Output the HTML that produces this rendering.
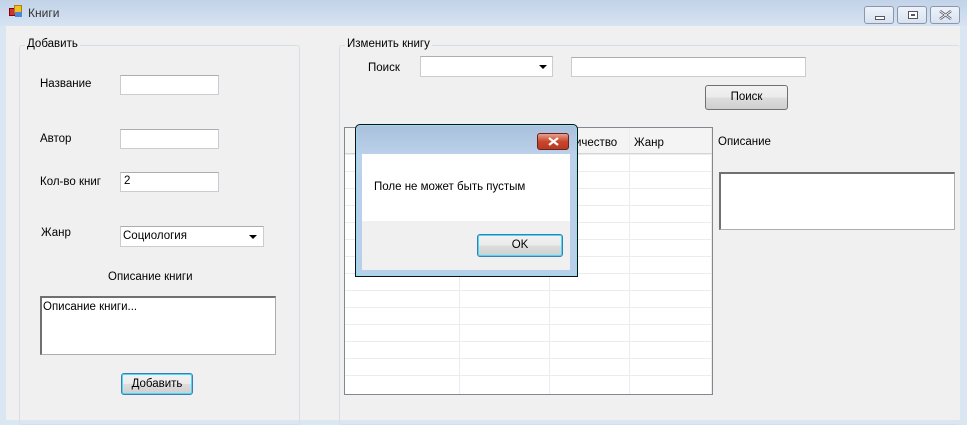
<!DOCTYPE html>
<html><head><meta charset="utf-8"><style>
*{margin:0;padding:0;box-sizing:border-box}
body{width:967px;height:420px;overflow:hidden;background:#dbe6f3;font-family:"Liberation Sans","DejaVu Sans",sans-serif;font-size:11.5px;color:#000;position:relative}
.a{position:absolute}
.tb{left:0;top:0;width:967px;height:26px;background:linear-gradient(#c2d3e8,#d6e3f2)}
.client{left:6px;top:26px;width:954px;height:394px;background:#f0f0f0}
.gb{border:1px solid #d5dfe5;border-radius:3px}
.lg{background:#f0f0f0;padding:0 2px;color:#000}
.tx{background:#fff;border:1px solid #c9cdd2;border-top-color:#abadb3}
.btn{border:1px solid #707070;border-radius:3px;background:linear-gradient(#f2f2f2 0%,#ebebeb 50%,#dddddd 51%,#cfcfcf 100%);text-align:center}
.wb{border:1px solid #8a97ab;border-radius:3px;background:linear-gradient(#eef3fa,#d8e2ef);height:18px;top:6px}
.ml{border:1px solid #abadb3;border-left:2px solid #707070;border-top:2px solid #707070;background:#fff}
.arr{position:absolute;width:0;height:0;border-left:4px solid transparent;border-right:4px solid transparent;border-top:4px solid #000}
</style></head><body>
<div class="a tb"></div>
<div class="a" style="left:9px;top:8px;width:7px;height:8px;background:#c33;border:1px solid #800"></div>
<div class="a" style="left:14px;top:5px;width:8px;height:8px;background:#f0c020;border:1px solid #b08010"></div>
<div class="a" style="left:15px;top:12px;width:7px;height:5px;background:#4a8ad8"></div>
<div class="a" style="left:28px;top:6px;font-size:12px;color:#333">Книги</div>
<div class="a wb" style="left:864px;width:30px"><div class="a" style="left:10px;top:9px;width:10px;height:4px;border:1px solid #556;background:#fff"></div></div>
<div class="a wb" style="left:897px;width:30px"><div class="a" style="left:10px;top:4px;width:10px;height:8px;border:1px solid #556;background:#fff"><div class="a" style="left:2px;top:2px;width:4px;height:2px;border:1px solid #556"></div></div></div>
<div class="a wb" style="left:930px;width:30px"><svg class="a" style="left:8px;top:3px" width="13" height="10"><path d="M1 1L12 9M12 1L1 9" stroke="#556" stroke-width="2.5"/><path d="M1 1L12 9M12 1L1 9" stroke="#fff" stroke-width="0.8"/></svg></div>
<div class="a client"></div>

<!-- Left group -->
<div class="a gb" style="left:19px;top:45px;width:281px;height:380px"></div>
<div class="a lg" style="left:25px;top:38px">Добавить</div>
<div class="a" style="left:40px;top:78px">Название</div>
<div class="a tx" style="left:120px;top:75px;width:99px;height:20px"></div>
<div class="a" style="left:40px;top:133px">Автор</div>
<div class="a tx" style="left:120px;top:129px;width:99px;height:20px"></div>
<div class="a" style="left:40px;top:176px">Кол-во книг</div>
<div class="a tx" style="left:120px;top:172px;width:99px;height:20px;padding:2px 3px">2</div>
<div class="a" style="left:41px;top:227px">Жанр</div>
<div class="a tx" style="left:120px;top:226px;width:144px;height:21px;padding:3px 2px">Социология<span class="arr" style="right:6px;top:8px"></span></div>
<div class="a" style="left:108px;top:271px">Описание книги</div>
<div class="a ml" style="left:40px;top:296px;width:236px;height:59px;padding:3px 1px">Описание книги...</div>
<div class="a btn" style="left:121px;top:373px;width:72px;height:22px;line-height:20px;border-color:#3c7fb1;box-shadow:inset 0 0 0 1px #48d8f8">Добавить</div>

<!-- Right group -->
<div class="a gb" style="left:339px;top:45px;width:621px;height:380px;border-right:none"></div>
<div class="a lg" style="left:345px;top:38px">Изменить книгу</div>
<div class="a" style="left:368px;top:62px">Поиск</div>
<div class="a tx" style="left:420px;top:56px;width:133px;height:21px"><span class="arr" style="right:5px;top:8px"></span></div>
<div class="a tx" style="left:571px;top:57px;width:235px;height:20px"></div>
<div class="a btn" style="left:705px;top:85px;width:83px;height:25px;line-height:23px">Поиск</div>
<div class="a" style="left:718px;top:136px">Описание</div>
<div class="a ml" style="left:719px;top:172px;width:236px;height:58px"></div>

<!-- Grid -->
<div class="a" style="left:344px;top:127px;width:369px;height:268px;border:1px solid #828790;background:#fff;overflow:hidden">
<svg width="367" height="266" style="position:absolute;left:0;top:0">
<rect x="0" y="0" width="367" height="25" fill="#f4f4f4"/>
<g stroke="#ececec" stroke-width="1">
<line x1="0" y1="26.5" x2="367" y2="26.5"/>
<line x1="0" y1="43.5" x2="367" y2="43.5"/><line x1="0" y1="60.5" x2="367" y2="60.5"/><line x1="0" y1="77.5" x2="367" y2="77.5"/><line x1="0" y1="94.5" x2="367" y2="94.5"/><line x1="0" y1="111.5" x2="367" y2="111.5"/><line x1="0" y1="128.5" x2="367" y2="128.5"/><line x1="0" y1="145.5" x2="367" y2="145.5"/><line x1="0" y1="162.5" x2="367" y2="162.5"/><line x1="0" y1="179.5" x2="367" y2="179.5"/><line x1="0" y1="196.5" x2="367" y2="196.5"/><line x1="0" y1="213.5" x2="367" y2="213.5"/><line x1="0" y1="230.5" x2="367" y2="230.5"/><line x1="0" y1="247.5" x2="367" y2="247.5"/>
<line x1="114.5" y1="0" x2="114.5" y2="266"/><line x1="204.5" y1="0" x2="204.5" y2="266"/><line x1="284.5" y1="0" x2="284.5" y2="266"/><line x1="366.5" y1="0" x2="366.5" y2="266"/>
</g>
<line x1="0" y1="25.5" x2="367" y2="25.5" stroke="#d5d5d5"/>
</svg>
<div class="a" style="left:230px;top:9px">ичество</div>
<div class="a" style="left:289px;top:9px">Жанр</div>
</div>

<!-- Dialog -->
<div class="a" style="left:355px;top:124px;width:223px;height:153px;border:1px solid #111;border-radius:5px 5px 0 0;background:linear-gradient(#a8c0dc,#bcd1ea 30px,#b8cfea);box-shadow:inset 0 0 0 1px #8fe0f0"></div>
<div class="a" style="left:537px;top:133px;width:32px;height:17px;border:1px solid #6b2020;border-radius:3px;background:linear-gradient(#e8a08c,#c8462c 50%,#b83a22)"><svg class="a" style="left:10px;top:3px" width="11" height="9"><path d="M1 1L10 8M10 1L1 8" stroke="#fff" stroke-width="2.2"/></svg></div>
<div class="a" style="left:362px;top:154px;width:208px;height:67px;background:#fff"></div>
<div class="a" style="left:362px;top:221px;width:208px;height:49px;background:#f0f0f0"></div>
<div class="a" style="left:374px;top:181px">Поле не может быть пустым</div>
<div class="a btn" style="left:477px;top:234px;width:86px;height:23px;line-height:21px;border-color:#3c7fb1;box-shadow:inset 0 0 0 1px #48d8f8">OK</div>
</body></html>
